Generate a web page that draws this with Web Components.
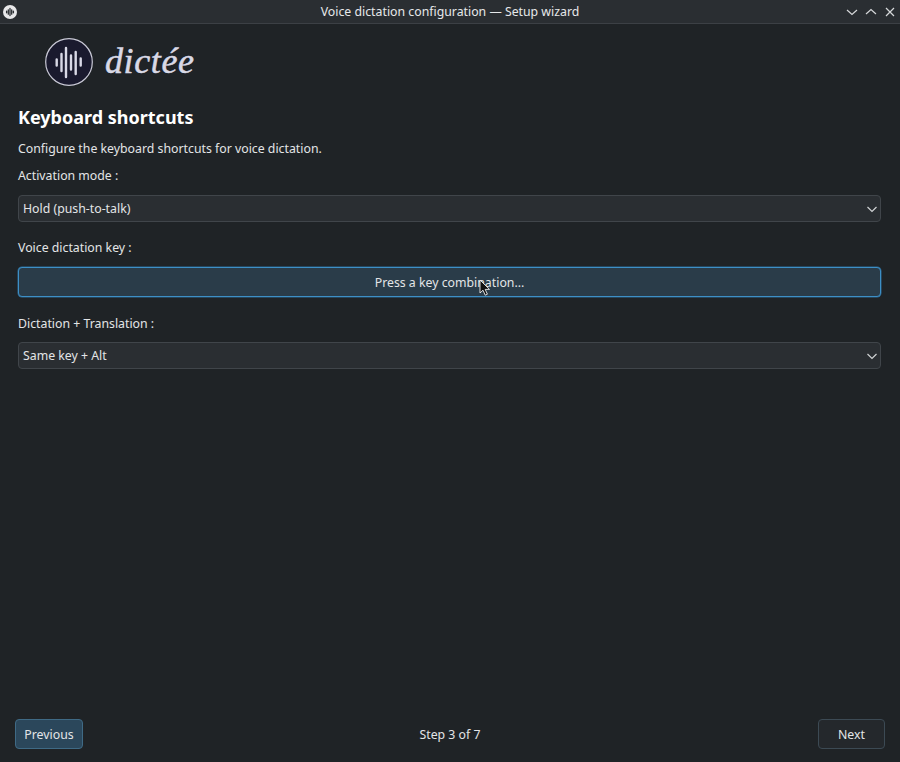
<!DOCTYPE html>
<html>
<head>
<meta charset="utf-8">
<title>Setup wizard</title>
<style>
  html, body { margin: 0; padding: 0; height: 100%; background: #1f2326; }
  body { font-family: "Noto Sans", sans-serif; font-size: 12.3px; color: #e3e5e7; overflow: hidden; }
</style>
</head>
<body>
<wizard-window>
  <title-bar slot="title">Voice dictation configuration — Setup wizard</title-bar>
  <dictee-logo slot="logo"></dictee-logo>
  <h-head slot="head">Keyboard shortcuts</h-head>
  <field-label slot="intro" style="margin-top:10px">Configure the keyboard shortcuts for voice dictation.</field-label>
  <field-label slot="f1" style="margin-top:9px">Activation mode :</field-label>
  <combo-box slot="f1b" style="margin-top:10px">Hold (push-to-talk)</combo-box>
  <field-label slot="f2" style="margin-top:17px">Voice dictation key :</field-label>
  <key-button slot="f2b" style="margin-top:10px">Press a key combination...</key-button>
  <field-label slot="f3" style="margin-top:18px">Dictation + Translation :</field-label>
  <combo-box slot="f3b" style="margin-top:9px">Same key + Alt</combo-box>
  <wizard-footer slot="footer" step="Step 3 of 7"></wizard-footer>
</wizard-window>
<script>
class WizardWindow extends HTMLElement {
  constructor() {
    super()
    this.attachShadow({ mode: "open" })
    this.shadowRoot.innerHTML = `
      <style>
        :host { display: flex; flex-direction: column; height: 762px; width: 900px; background: #1f2326; box-sizing: border-box; }
        main { flex: 1; display: flex; flex-direction: column; padding: 0 19px 0 18px; min-height: 0; }
      </style>
      <slot name="title"></slot>
      <main>
        <slot name="logo"></slot>
        <slot name="head"></slot>
        <slot name="intro"></slot>
        <slot name="f1"></slot>
        <slot name="f1b"></slot>
        <slot name="f2"></slot>
        <slot name="f2b"></slot>
        <slot name="f3"></slot>
        <slot name="f3b"></slot>
      </main>
      <slot name="footer"></slot>
    `
  }
}
customElements.define("wizard-window", WizardWindow)

class TitleBar extends HTMLElement {
  constructor() {
    super()
    this.attachShadow({ mode: "open" })
    this.shadowRoot.innerHTML = `
      <style>
        :host { display: grid; grid-template-columns: 60px 1fr 60px; align-items: center; height: 23px; background: #2a2e32; border-bottom: 1px solid #3c4045; color: #e6e8ea; font-size: 12.3px; }
        .app { display: flex; padding-left: 3px; }
        .title { text-align: center; }
        .btns { display: flex; justify-content: flex-end; gap: 7px; padding-right: 4px; }
        svg { display: block; }
      </style>
      <div class="app">
        <svg width="14" height="14" viewBox="0 0 14 14">
          <circle cx="7" cy="7" r="7" fill="#e8e8ea"/>
          <path d="M3.600 6.200v1.600M5.300 4.800v4.400M7 3.400v7.200M8.700 4.800v4.400M10.400 6.200v1.600" stroke="#2a2e32" stroke-width="1.300" stroke-linecap="round"/>
        </svg>
      </div>
      <div class="title"><slot></slot></div>
      <div class="btns">
        <svg width="12" height="12" viewBox="0 0 12 12"><path d="M1 4l5 4.500L11 4" fill="none" stroke="#d6d8da" stroke-width="1.200"/></svg>
        <svg width="12" height="12" viewBox="0 0 12 12"><path d="M1 8l5-4.500L11 8" fill="none" stroke="#d6d8da" stroke-width="1.200"/></svg>
        <svg width="12" height="12" viewBox="0 0 12 12"><path d="M2 2l8 8M10 2l-8 8" fill="none" stroke="#d6d8da" stroke-width="1.200"/></svg>
      </div>
    `
  }
}
customElements.define("title-bar", TitleBar)

class DicteeLogo extends HTMLElement {
  constructor() {
    super()
    this.attachShadow({ mode: "open" })
    this.shadowRoot.innerHTML = `
      <style>
        :host { display: flex; align-items: center; gap: 12px; height: 48px; margin-top: 14px; padding-left: 27px; }
        svg { display: block; flex: none; }
        span { font-family: "Liberation Serif", serif; font-style: italic; font-size: 36px; color: #d9d9e6; letter-spacing: .6px; line-height: 46px; padding-bottom: 2px; -webkit-text-stroke: .5px #d9d9e6; }
      </style>
      <svg width="48" height="48" viewBox="0 0 48 48">
        <circle cx="24" cy="24" r="23.300" fill="#1a1a2e" stroke="#c9c9d6" stroke-width="1.200"/>
        <path d="M11.700 21.500v6M16.500 16v17M21 10v29M26 17.500v14M30.700 14v22M35.700 20.500v7" stroke="#d9d9e6" stroke-width="2.400" stroke-linecap="round"/>
      </svg>
      <span>dictée</span>
    `
  }
}
customElements.define("dictee-logo", DicteeLogo)

class HHead extends HTMLElement {
  constructor() {
    super()
    this.attachShadow({ mode: "open" })
    this.shadowRoot.innerHTML = `
      <style>
        :host { display: block; margin-top: 19px; font-size: 18px; font-weight: 700; color: #fff; line-height: 25px; height: 25px; }
      </style>
      <slot></slot>
    `
  }
}
customElements.define("h-head", HHead)

class FieldLabel extends HTMLElement {
  constructor() {
    super()
    this.attachShadow({ mode: "open" })
    this.shadowRoot.innerHTML = `
      <style>
        :host { display: block; height: 18px; line-height: 18px; font-size: 12.3px; color: #e3e5e7; }
      </style>
      <slot></slot>
    `
  }
}
customElements.define("field-label", FieldLabel)

class ComboBox extends HTMLElement {
  constructor() {
    super()
    this.attachShadow({ mode: "open" })
    this.shadowRoot.innerHTML = `
      <style>
        :host { display: flex; align-items: center; justify-content: space-between; height: 27px; box-sizing: border-box; border: 1px solid #40454a; border-radius: 4px; background: #2a2e32; padding: 0 2px 0 4px; font-size: 12.3px; color: #e3e5e7; }
        svg { display: block; }
      </style>
      <slot></slot>
      <svg width="12" height="12" viewBox="0 0 12 12"><path d="M1.500 4l4.500 4.500L10.500 4" fill="none" stroke="#d0d2d4" stroke-width="1.200"/></svg>
    `
  }
}
customElements.define("combo-box", ComboBox)

class KeyButton extends HTMLElement {
  constructor() {
    super()
    this.attachShadow({ mode: "open" })
    this.shadowRoot.innerHTML = `
      <style>
        :host { display: flex; align-items: center; justify-content: center; position: relative; height: 30px; box-sizing: border-box; border: 1px solid #3d8fc6; border-radius: 4px; background: #2a3c49; box-shadow: 0 0 0 .5px #2d6a94; font-size: 12.3px; color: #e3e5e7; }
        svg { position: absolute; left: 460px; top: 11px; }
      </style>
      <slot></slot>
      <svg width="12" height="18" viewBox="0 0 12 18"><path d="M1 1v13l3-2.800 2.200 5 2.200-1-2.200-4.800h4.300z" fill="#111" stroke="#eee" stroke-width=".9"/></svg>
    `
  }
}
customElements.define("key-button", KeyButton)

class WizardFooter extends HTMLElement {
  constructor() {
    super()
    this.attachShadow({ mode: "open" })
    this.shadowRoot.innerHTML = `
      <style>
        :host { display: grid; grid-template-columns: 1fr auto 1fr; align-items: center; height: 30px; padding: 0 15px 13px; color: #e3e5e7; font-size: 12.3px; }
        button { font: inherit; color: #e3e5e7; height: 30px; border-radius: 4px; box-sizing: border-box; padding: 0; }
        .prev { width: 68px; background: #2b475b; border: 1px solid #3f6a85; justify-self: start; }
        .next { width: 67px; background: #24282c; border: 1px solid #3c4a54; justify-self: end; }
      </style>
      <button class="prev">Previous</button>
      <span id="s"></span>
      <button class="next">Next</button>
    `
  }
  connectedCallback() {
    this.shadowRoot.getElementById("s").textContent = this.getAttribute("step")
  }
}
customElements.define("wizard-footer", WizardFooter)
</script>
</body>
</html>
